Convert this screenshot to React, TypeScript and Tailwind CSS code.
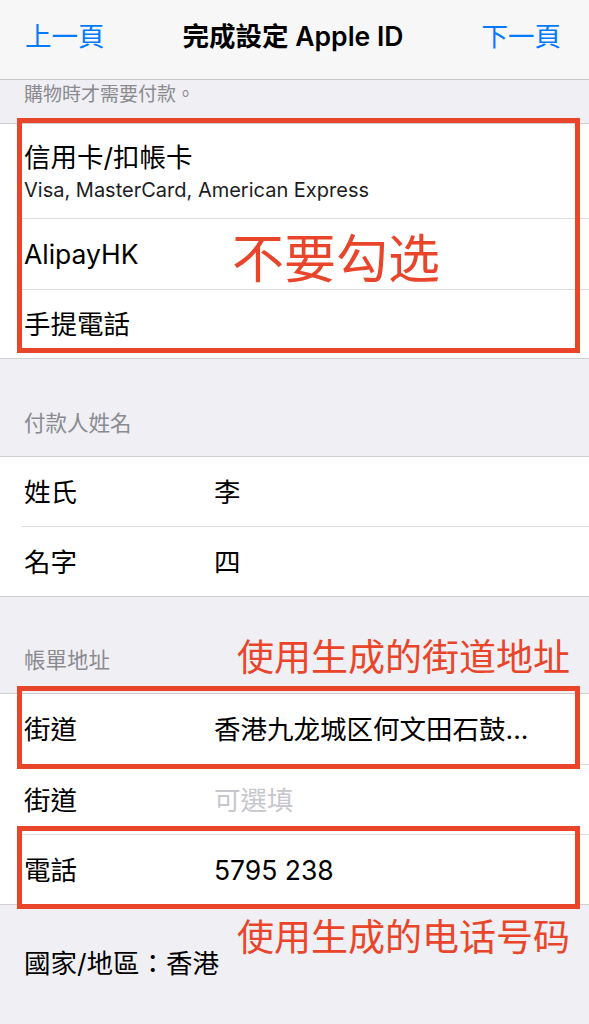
import React from "react";

function RedBox({ className }: { className: string }) {
  return (
    <div
      className={
        "pointer-events-none absolute z-10 border-[5px] border-[#e9452b] " +
        className
      }
    />
  );
}

function Row({
  label,
  value,
  placeholder,
  last,
  heightClass,
  children,
}: {
  label: string;
  value?: string;
  placeholder?: string;
  last?: boolean;
  heightClass: string;
  children?: React.ReactNode;
}) {
  return (
    <div className={"relative pl-[22px] " + heightClass}>
      <div
        className={
          "flex h-full items-center pl-[2px] " +
          (last ? "" : "border-b border-[#dcdce0]")
        }
      >
        <div className="w-[190px] shrink-0 text-[26.5px] leading-[34px] text-black">
          {label}
        </div>
        {value && (
          <div className="text-[26.5px] leading-[34px] text-black whitespace-nowrap">
            {value}
          </div>
        )}
        {placeholder && (
          <div className="text-[26.5px] leading-[34px] text-[#c7c7cd]">
            {placeholder}
          </div>
        )}
      </div>
      {children}
    </div>
  );
}

export default function App() {
  return (
    <div className="min-h-[1024px] w-[589px] overflow-hidden bg-[#efeff4] font-['Inter','Noto_Sans_CJK_TC',sans-serif]">
      {/* Nav bar */}
      <div className="h-[80px] border-b border-[#c8c7cc] bg-[#f7f7f7]">
        <div className="flex h-[72px] items-center pl-[25px] pr-[28px]">
          <div className="flex-1 text-[26.5px] leading-[34px] text-[#007aff]">
            上一頁
          </div>
          <div className="shrink-0 text-[26.5px] font-semibold leading-[34px] text-black">
            完成設定 Apple ID
          </div>
          <div className="flex-1 text-right text-[26.5px] leading-[34px] text-[#007aff]">
            下一頁
          </div>
        </div>
      </div>

      {/* Footer note */}
      <div className="h-[43px] pl-[24px] pt-[3px]">
        <div className="text-[19px] leading-[24px] text-[#8a8a8f]">
          購物時才需要付款。
        </div>
      </div>

      {/* Payment methods */}
      <div className="relative border-y border-[#cfcfd3] bg-white">
        <div className="relative h-[95px] pl-[22px]">
          <div className="flex h-full flex-col justify-center border-b border-[#dcdce0] pl-[2px]">
            <div className="text-[26.5px] leading-[32px] text-black">
              信用卡/扣帳卡
            </div>
            <div className="mt-[5px] text-[20px] leading-[24px] text-[#1c1c1e]">
              Visa, MasterCard, American Express
            </div>
          </div>
        </div>
        <Row label="AlipayHK" heightClass="h-[71px]" />
        <Row label="手提電話" heightClass="h-[68px]" last />
        <RedBox className="left-[17px] right-[9px] top-[-6px] bottom-[5px]" />
        <div className="absolute left-[232px] top-[106px] z-10 font-['Noto_Sans_CJK_SC',sans-serif] text-[52px] leading-[52px] text-[#e9452b]">
          不要勾选
        </div>
      </div>

      {/* Payer name header */}
      <div className="flex h-[97px] flex-col justify-end pb-[19px] pl-[24px]">
        <div className="text-[21.5px] leading-[28px] text-[#8a8a8f]">付款人姓名</div>
      </div>

      <div className="border-y border-[#cfcfd3] bg-white">
        <Row label="姓氏" value="李" heightClass="h-[70px]" />
        <Row label="名字" value="四" heightClass="h-[69px]" last />
      </div>

      {/* Billing address header */}
      <div className="flex h-[96px] items-end justify-between pl-[24px] pr-[19px]">
        <div className="mb-[19px] text-[21.5px] leading-[28px] text-[#8a8a8f]">
          帳單地址
        </div>
        <div className="mb-[16px] font-['Noto_Sans_CJK_SC',sans-serif] text-[37px] leading-[44px] text-[#e9452b]">
          使用生成的街道地址
        </div>
      </div>

      <div className="border-y border-[#cfcfd3] bg-white">
        <Row label="街道" value="香港九龙城区何文田石鼓..." heightClass="h-[71px]">
          <RedBox className="left-[17px] right-[9px] top-[-8px] bottom-[-4px]" />
        </Row>
        <Row label="街道" placeholder="可選填" heightClass="h-[70px]" />
        <Row label="電話" value="5795 238" heightClass="h-[69px]" last>
          <RedBox className="left-[17px] right-[9px] top-[-9px] bottom-[-5px]" />
        </Row>
      </div>

      {/* Bottom */}
      <div className="flex items-start justify-between pl-[24px] pr-[19px]">
        <div className="mt-[44px] text-[26.5px] leading-[28px] text-black">
          國家/地區：香港
        </div>
        <div className="mt-[8px] font-['Noto_Sans_CJK_SC',sans-serif] text-[37px] leading-[44px] text-[#e9452b]">
          使用生成的电话号码
        </div>
      </div>
    </div>
  );
}
